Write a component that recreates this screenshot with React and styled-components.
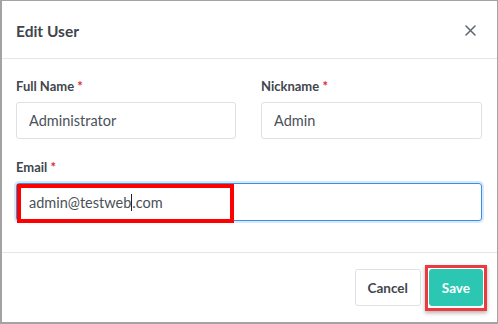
import styled, { createGlobalStyle } from "styled-components"

const GlobalStyle = createGlobalStyle`
    * {
        box-sizing: border-box;
    }

    body {
        margin: 0;
        font-family: Lato, "Liberation Sans", sans-serif;
        color: #41464d;
        background: #fff;
    }
`

export default function App() {
    return (
        <>
            <GlobalStyle />
            <Modal>
                <Header>
                    <Title>Edit User</Title>
                    <Close aria-label="close">
                        <svg width="11" height="11" viewBox="0 0 11 11">
                            <path d="M1 1 L10 10 M10 1 L1 10" stroke="#5f656c" strokeWidth="1.5" strokeLinecap="round" />
                        </svg>
                    </Close>
                </Header>

                <Body>
                    <Row>
                        <Group>
                            <Label>Full Name <Req>*</Req></Label>
                            <Input defaultValue="Administrator" />
                        </Group>
                        <Group>
                            <Label>Nickname <Req>*</Req></Label>
                            <Input defaultValue="Admin" />
                        </Group>
                    </Row>

                    <Group>
                        <Label>Email <Req>*</Req></Label>
                        <FocusedField>
                            admin@testweb<Caret />.com
                            <Highlight />
                        </FocusedField>
                    </Group>
                </Body>

                <Footer>
                    <Button>Cancel</Button>
                    <SaveWrap>
                        <Button primary>Save</Button>
                        <SaveHighlight />
                    </SaveWrap>
                </Footer>
            </Modal>
        </>
    )
}

const Modal = styled.div`
    width: 498px;
    height: 324px;
    border: 1px solid #a3a3a3;
    border-left-width: 2px;
    border-bottom-width: 2px;
    display: flex;
    flex-direction: column;
    background: #fff;
`

const Header = styled.div`
    height: 58px;
    display: flex;
    align-items: center;
    justify-content: space-between;
    padding: 2px 21px 0 14px;
    border-bottom: 1px solid #e3e6ea;
`

const Title = styled.h2`
    margin: 0;
    font-size: 15.5px;
    font-weight: 700;
    color: #3f454c;
`

const Close = styled.button`
    border: none;
    background: none;
    padding: 0;
    display: flex;
    cursor: pointer;
`

const Body = styled.div`
    padding: 19px 15px 0 14px;
    display: flex;
    flex-direction: column;
    gap: 20px;
    height: 194px;
    border-bottom: 1px solid #e3e6ea;
`

const Row = styled.div`
    display: grid;
    grid-template-columns: 220px 221px;
    column-gap: 25px;
`

const Group = styled.div`
    display: flex;
    flex-direction: column;
    gap: 8px;
`

const Label = styled.label`
    font-size: 13px;
    font-weight: 700;
    line-height: 16px;
    color: #41464d;
`

const Req = styled.span`
    color: #e0262b;
`

const Input = styled.input`
    height: 37px;
    width: 100%;
    border: 1px solid #dde1e6;
    border-radius: 3px;
    padding: 0 12px;
    font-family: Lato, "Liberation Sans", sans-serif;
    font-size: 14.5px;
    color: #4b5158;
    outline: none;
`

const FocusedField = styled.div`
    position: relative;
    height: 38px;
    display: flex;
    align-items: center;
    border: 1px solid #3a8ee6;
    border-radius: 3px;
    box-shadow: 0 0 0 2px rgba(58, 142, 230, 0.2);
    padding: 0 12px;
    font-size: 14.5px;
    color: #4b5158;
    white-space: pre;
`

const Caret = styled.span`
    display: inline-block;
    width: 1px;
    height: 17px;
    background: #222;
`

const Highlight = styled.span`
    position: absolute;
    left: 0;
    top: 0;
    width: 217px;
    height: 39px;
    border: 4px solid #ff0000;
`

const Footer = styled.div`
    flex: 1;
    display: flex;
    justify-content: flex-end;
    align-items: center;
    gap: 8px;
    padding: 0 14px 0 0;
`

const Button = styled.button`
    height: 37px;
    padding: 0 ${props => props.primary ? "12px" : "12px"};
    border-radius: 3px;
    border: 1px solid ${props => props.primary ? "#2cc7b3" : "#dde1e6"};
    background: ${props => props.primary ? "#2cc7b3" : "#fff"};
    color: ${props => props.primary ? "#fff" : "#41464d"};
    font-family: Lato, "Liberation Sans", sans-serif;
    font-size: 13.5px;
    font-weight: 700;
    cursor: pointer;
`

const SaveWrap = styled.div`
    position: relative;
    display: flex;
`

const SaveHighlight = styled.span`
    position: absolute;
    left: -4px;
    top: -4px;
    right: -4px;
    bottom: -5px;
    border: 3px solid #ec3b3f;
    box-shadow: 0 2px 4px rgba(0, 0, 0, 0.3);
`
